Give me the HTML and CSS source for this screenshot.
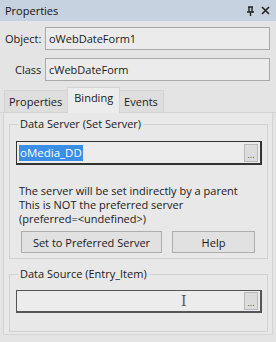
FILE: index.html
```html
<!DOCTYPE html>
<html>
<head>
<meta charset="utf-8">
<link rel="stylesheet" href="styles.css">
</head>
<body>
<div class="win">
  <div class="title">
    <span>Properties</span>
    <span class="ctrls">
      <svg width="9" height="10" viewBox="0 0 9 10"><path d="M2 1h5M3 1v5M6 1v5M1 6h7M4.5 6v4" stroke="#222" stroke-width="1.4" fill="none"/></svg>
      <svg width="9" height="9" viewBox="0 0 9 9"><path d="M1 1l7 7M8 1l-7 7" stroke="#222" stroke-width="1.6"/></svg>
    </span>
  </div>
  <div class="row first">
    <span class="lbl">Object:</span>
    <div class="box">oWebDateForm1</div>
  </div>
  <div class="row">
    <span class="lbl cls">Class</span>
    <div class="box">cWebDateForm</div>
  </div>
  <div class="tabs">
    <div class="tab">Properties</div>
    <div class="tab sel">Binding</div>
    <div class="tab">Events</div>
  </div>
  <div class="panel">
    <fieldset class="grp g1">
      <legend>Data Server (Set Server)</legend>
      <div class="inp active"><span class="hl">oMedia_DD</span><span class="dots">...</span></div>
      <div class="msg">The server will be set indirectly by a parent<br>This is NOT the preferred server<br>(preferred=&lt;undefined&gt;)</div>
      <div class="btns">
        <div class="btn wide">Set to Preferred Server</div>
        <div class="btn help">Help</div>
      </div>
    </fieldset>
    <fieldset class="grp g2">
      <legend>Data Source (Entry_Item)</legend>
      <div class="inp"><span class="cursor">I</span><span class="dots">...</span></div>
    </fieldset>
  </div>
</div>
</body>
</html>
```
FILE: styles.css
```css
html, body { margin: 0; padding: 0; }
body { background: #e4e4e4; font-family: "Open Sans", "Noto Sans", sans-serif; font-size: 11px; color: #1a1a1a; width: 276px; height: 342px; overflow: hidden; }
.win { width: 276px; height: 342px; }
.title { height: 21px; background: #c6d2df; display: flex; align-items: center; justify-content: space-between; padding: 0 6px 0 5px; font-size: 11px; color: #111; }
.ctrls { display: flex; gap: 6px; align-items: center; }
.row { display: flex; align-items: center; margin-top: 8px; height: 23px; }
.row.first { margin-top: 6px; }
.lbl { width: 45px; padding-left: 5px; box-sizing: border-box; }
.lbl.cls { padding-left: 15px; }
.box { width: 225px; height: 23px; box-sizing: border-box; border: 1px solid #a9a9a9; background: #ebebeb; display: flex; align-items: center; padding-left: 3px; }
.tabs { display: flex; margin-top: 7px; padding-left: 4px; height: 24px; align-items: flex-end; border-bottom: 1px solid #d4d4d4; }
.tab { height: 22px; display: flex; align-items: center; padding: 0 5px 0 4px; border: 1px solid #d4d4d4; border-bottom: none; background: #dedede; margin-right: -1px; box-sizing: border-box; }
.tab.sel { height: 26px; background: #ececec; padding: 0 6px; position: relative; top: 1px; align-items: flex-start; padding-top: 2px; }
.panel { margin: 0 3px; height: 222px; border: 1px solid #d4d4d4; border-top: none; background: #e8e8e8; box-sizing: border-box; padding: 3px 4px 0 5px; }
.grp { border: 1px solid #d2d2d2; margin: 0; padding: 9px 5px 5px 6px; }
.grp legend { padding: 0 2px; margin-left: 2px; line-height: 16px; }
.g2 { margin-top: 7px; padding-top: 8px; padding-bottom: 18px; }
.inp { height: 24px; box-sizing: border-box; border: 1px solid #8c8c8c; background: #ececec; display: flex; align-items: center; justify-content: space-between; padding: 0 2px 0 2px; }
.inp.active { border: 2px solid #333; border-top-width: 1px; border-left-width: 1px; }
.g2 .inp { height: 23px; border: 1px solid #555; border-bottom-width: 2px; border-right-width: 2px; justify-content: flex-start; }
.hl { background: #3a8ee6; color: #fff; padding: 0 1px; line-height: 16px; font-size: 11.5px; }
.dots { width: 14px; height: 18px; border: 1px solid #b9b9b9; background: #dcdcdc; font-size: 9px; color: #555; display: flex; align-items: flex-end; justify-content: center; box-sizing: border-box; padding-bottom: 3px; line-height: 6px; }
.cursor { margin-left: 162px; font-family: "DejaVu Serif", serif; color: #555; font-size: 14px; }
.g2 .dots { margin-left: auto; }
.msg { margin-top: 19px; line-height: 14px; padding-left: 3px; }
.btns { display: flex; gap: 10px; margin-top: 5px; }
.btn { height: 22px; border: 1px solid #adadad; background: #e1e1e1; display: flex; align-items: center; justify-content: center; box-sizing: border-box; }
.btn.wide { width: 141px; margin-left: 5px; }
.btn.help { width: 83px; }
```
